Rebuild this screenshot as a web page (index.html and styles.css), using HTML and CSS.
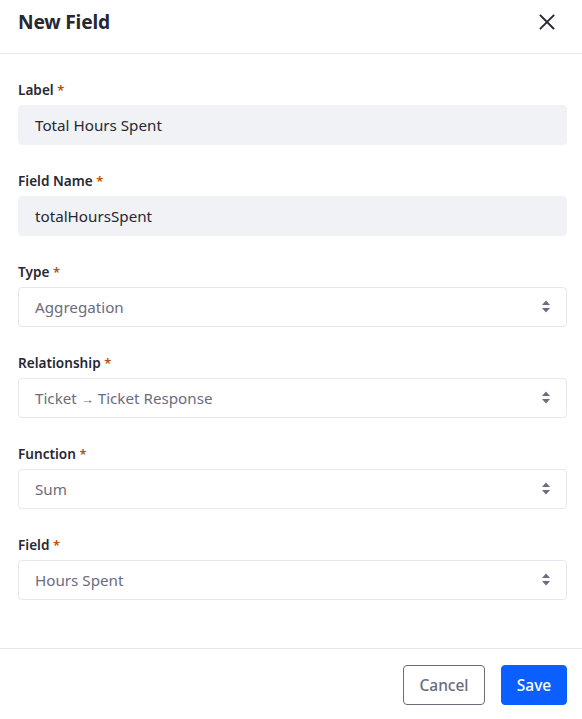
FILE: index.html
```html
<!DOCTYPE html>
<html>
<head>
<meta charset="utf-8">
<link rel="stylesheet" href="styles.css">
</head>
<body>
<div class="modal">
  <div class="modal-header">
    <div class="modal-title">New Field</div>
    <button class="close" aria-label="Close">
      <svg width="16" height="16" viewBox="0 0 16 16"><path d="M1.5 1.5 L14.5 14.5 M14.5 1.5 L1.5 14.5" stroke="#272833" stroke-width="1.8" stroke-linecap="square"/></svg>
    </button>
  </div>
  <div class="modal-body">
    <div class="form-group">
      <label class="lbl">Label <span class="req">*</span></label>
      <div class="input readonly">Total Hours Spent</div>
    </div>
    <div class="form-group">
      <label class="lbl">Field Name <span class="req">*</span></label>
      <div class="input readonly">totalHoursSpent</div>
    </div>
    <div class="form-group">
      <label class="lbl">Type <span class="req">*</span></label>
      <div class="input select"><span>Aggregation</span><svg class="arrows" width="10" height="14" viewBox="0 0 10 14"><path d="M1 5 L5 0.5 L9 5 Z M1 8 L9 8 L5 12.5 Z" fill="#6b6c7e"/></svg></div>
    </div>
    <div class="form-group">
      <label class="lbl">Relationship <span class="req">*</span></label>
      <div class="input select"><span>Ticket <span class="arrow">→</span> Ticket Response</span><svg class="arrows" width="10" height="14" viewBox="0 0 10 14"><path d="M1 5 L5 0.5 L9 5 Z M1 8 L9 8 L5 12.5 Z" fill="#6b6c7e"/></svg></div>
    </div>
    <div class="form-group">
      <label class="lbl">Function <span class="req">*</span></label>
      <div class="input select"><span>Sum</span><svg class="arrows" width="10" height="14" viewBox="0 0 10 14"><path d="M1 5 L5 0.5 L9 5 Z M1 8 L9 8 L5 12.5 Z" fill="#6b6c7e"/></svg></div>
    </div>
    <div class="form-group">
      <label class="lbl">Field <span class="req">*</span></label>
      <div class="input select"><span>Hours Spent</span><svg class="arrows" width="10" height="14" viewBox="0 0 10 14"><path d="M1 5 L5 0.5 L9 5 Z M1 8 L9 8 L5 12.5 Z" fill="#6b6c7e"/></svg></div>
    </div>
  </div>
  <div class="modal-footer">
    <button class="btn btn-secondary">Cancel</button>
    <button class="btn btn-primary">Save</button>
  </div>
</div>
</body>
</html>
```

FILE: styles.css
```css
html, body {
  margin: 0;
  padding: 0;
  background: #fff;
}
body {
  font-family: "Noto Sans", "Open Sans", sans-serif;
  color: #272833;
}
.modal {
  width: 582px;
  height: 719px;
  display: flex;
  flex-direction: column;
}
.modal-header {
  height: 44px;
  padding: 0 18px 9px 18px;
  border-bottom: 1px solid #e7e7ed;
  display: flex;
  align-items: center;
  justify-content: space-between;
}
.modal-title {
  font-size: 19.2px;
  font-weight: 700;
  line-height: 24px;
  letter-spacing: -0.2px;
}
.close {
  width: 32px;
  height: 32px;
  padding: 0;
  margin-right: 1px;
  border: 0;
  background: transparent;
  display: flex;
  align-items: center;
  justify-content: center;
}
.modal-body {
  flex: 1;
  padding: 26px 15px 0 18px;
  display: flex;
  flex-direction: column;
  gap: 26px;
}
.form-group {
  display: flex;
  flex-direction: column;
}
.lbl {
  font-size: 13.6px;
  font-weight: 600;
  line-height: 20px;
  margin-bottom: 5px;
}
.req {
  color: #b95000;
  font-size: 13px;
}
.input {
  height: 40px;
  box-sizing: border-box;
  border: 1px solid #f1f2f5;
  background: #f1f2f5;
  border-radius: 4px;
  padding: 0 16px;
  display: flex;
  align-items: center;
  font-size: 15.2px;
  color: #272833;
}
.input.select {
  background: #fff;
  border-color: #e7e7ed;
  color: #6b6c7e;
  justify-content: space-between;
  padding-right: 15px;
}
.arrow {
  font-size: 13px;
}
.modal-footer {
  height: 71px;
  border-top: 1px solid #e7e7ed;
  box-sizing: border-box;
  padding: 16px 15px 0 0;
  display: flex;
  justify-content: flex-end;
  align-items: flex-start;
  gap: 16px;
}
.btn {
  height: 40px;
  box-sizing: border-box;
  border-radius: 4px;
  font-family: inherit;
  font-size: 15.5px;
  font-weight: 500;
  padding: 0 10px;
}
.btn-secondary {
  width: 82px;
  background: #fff;
  border: 1px solid #6b6c7e;
  color: #6b6c7e;
}
.btn-primary {
  width: 66px;
  background: #0b5fff;
  border: 1px solid #0b5fff;
  color: #fff;
}
```
